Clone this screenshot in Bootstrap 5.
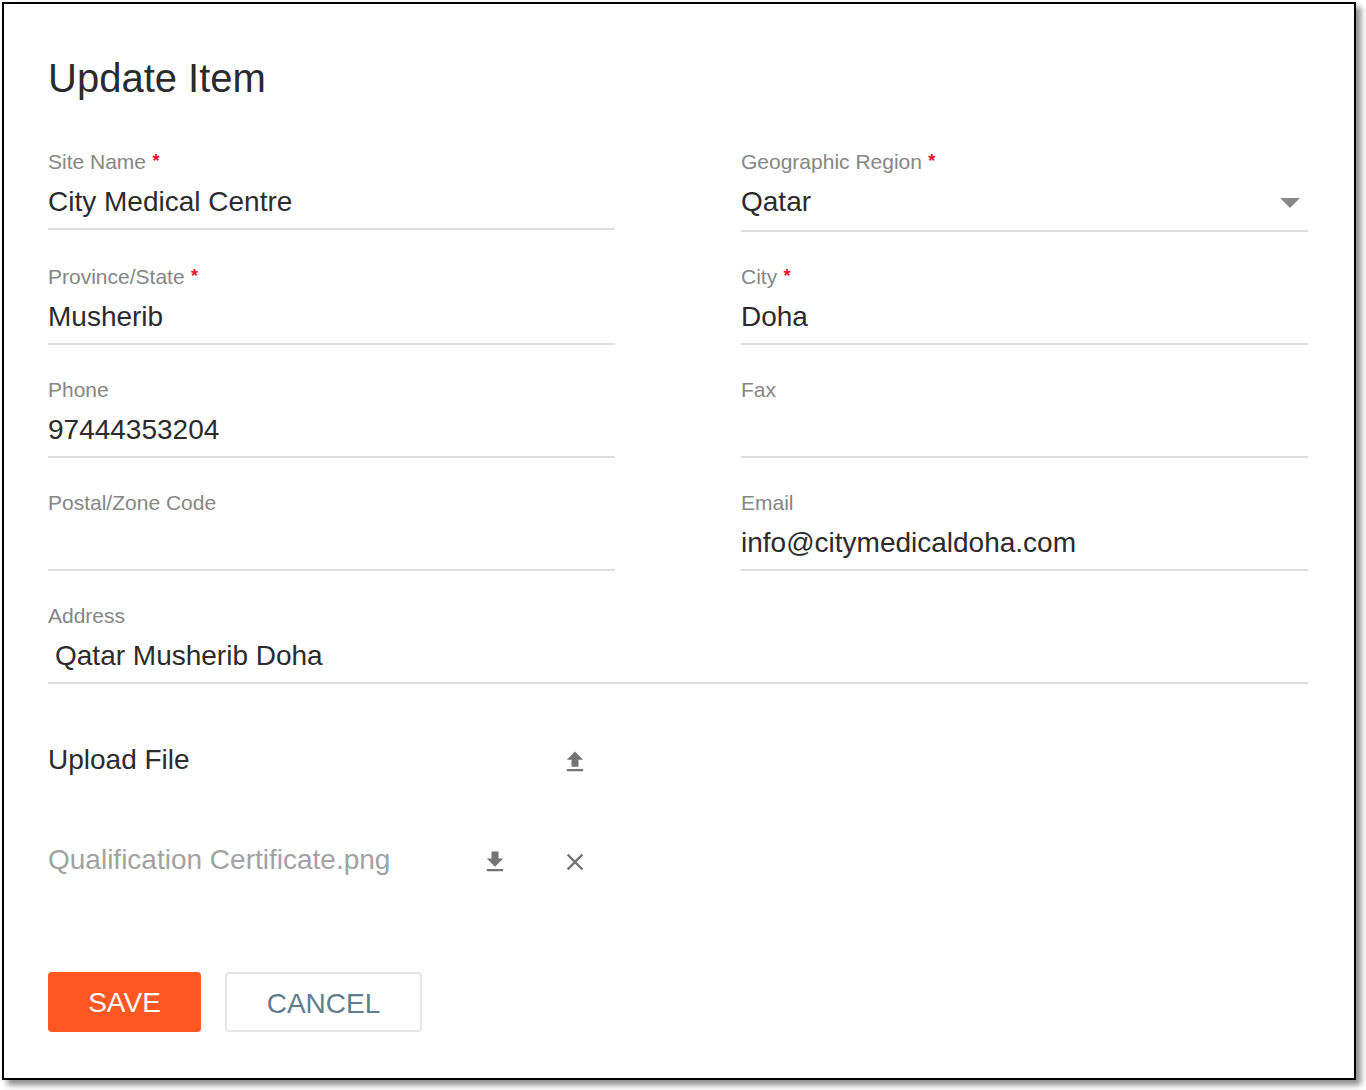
<!DOCTYPE html>
<html lang="en">
<head>
<meta charset="utf-8">
<title>Update Item</title>
<link href="https://cdn.jsdelivr.net/npm/bootstrap@5.3.0/dist/css/bootstrap.min.css" rel="stylesheet">
<style>
html,body{height:1090px;overflow:hidden;background:#fff}
body{font-family:"Liberation Sans",Arial,sans-serif;color:#2b2b2b}
.frame{width:1354px;height:1078px;margin:2px 0 0 2px;border:2px solid #000;background:#fff;box-shadow:5px 5px 6px rgba(0,0,0,.45);padding:0 46px 0 44px}
.ttl{font-size:40px;font-weight:400;line-height:44px;margin:0;padding:52px 0 0 0;height:146px;color:#2b2b2b}
.cols{--bs-gutter-x:126px;--bs-gutter-y:0}
.fld{height:113px;display:block;margin:0}
.fld-first{height:115px}
.fld-last{height:105px}
.lbl{display:block;font-size:21px;line-height:24px;color:#868686;height:24px}
.req{color:#e8112d;font-size:18px;font-weight:700;margin-left:.5px}
.req-star{display:inline-block;transform:translateY(-2px)}
.val{display:block;font-size:28px;line-height:40px;height:54px;padding:8px 0 6px;border:0;width:100%;background:transparent;color:#2b2b2b;font-family:inherit;outline:0}
.line{display:block;height:2px;background:#dedede}
.sel{display:flex;align-items:center;justify-content:space-between;height:56px;padding:8px 0;font-size:28px;line-height:40px}
.caret{width:0;height:0;border-left:10px solid transparent;border-right:10px solid transparent;border-top:10px solid #888;margin-right:8px;margin-top:2px}
.addr{padding-left:7px}
.up-row{height:100px;width:567px;display:flex;align-items:center;font-size:28px;line-height:40px;color:#2b2b2b}
.up-name,.file-name{width:427px;padding-top:2px}
.file-name{color:#a2a2a2}
.ico{width:40px;display:flex;justify-content:center;align-items:center;height:40px;margin-top:6px}
.ico svg{width:28px;height:28px;display:block;fill:#757575}
.act-gap{width:40px}
.btn-save,.btn-cancel{font-size:28px;height:60px;line-height:1;border-radius:4px;padding:0;text-transform:uppercase}
.btn-save{width:153px;background:#ff5722;border:0;color:#fff;padding-top:2px}
.btn-save:hover{background:#ff5722;color:#fff}
.btn-cancel{width:197px;background:#fff;border:2px solid #e6e6e6;color:#607d8b;margin-left:24px;padding-top:4px}
.btn-cancel:hover{background:#fff;color:#607d8b;border-color:#e6e6e6}
.actions{margin-top:63px}
</style>
</head>
<body>
<div class="frame">
  <h1 class="ttl">Update Item</h1>
  <form>
    <div class="row cols">
      <div class="col-6">
        <label class="fld fld-first"><span class="lbl">Site Name <span class="req"><span class="req-star">*</span></span></span><input class="val" value="City Medical Centre"><span class="line"></span></label>
      </div>
      <div class="col-6">
        <div class="fld fld-first"><span class="lbl">Geographic Region <span class="req"><span class="req-star">*</span></span></span><div class="sel"><span>Qatar</span><span class="caret"></span></div><span class="line"></span></div>
      </div>
      <div class="col-6">
        <label class="fld"><span class="lbl">Province/State <span class="req"><span class="req-star">*</span></span></span><input class="val" value="Musherib"><span class="line"></span></label>
      </div>
      <div class="col-6">
        <label class="fld"><span class="lbl">City <span class="req"><span class="req-star">*</span></span></span><input class="val" value="Doha"><span class="line"></span></label>
      </div>
      <div class="col-6">
        <label class="fld"><span class="lbl">Phone</span><input class="val" value="97444353204"><span class="line"></span></label>
      </div>
      <div class="col-6">
        <label class="fld"><span class="lbl">Fax</span><input class="val" value=""><span class="line"></span></label>
      </div>
      <div class="col-6">
        <label class="fld"><span class="lbl">Postal/Zone Code</span><input class="val" value=""><span class="line"></span></label>
      </div>
      <div class="col-6">
        <label class="fld"><span class="lbl">Email</span><input class="val" value="info@citymedicaldoha.com"><span class="line"></span></label>
      </div>
      <div class="col-12">
        <label class="fld fld-last"><span class="lbl">Address</span><input class="val addr" value="Qatar Musherib Doha"><span class="line"></span></label>
      </div>
    </div>
    <div>
      <div class="up-row">
        <span class="up-name">Upload File</span>
        <span class="act-gap"></span>
        <span class="act-gap"></span>
        <span class="ico"><svg viewBox="0 0 24 24"><path d="M9 16h6v-6h4l-7-7-7 7h4zm-4 2h14v2H5z"/></svg></span>
      </div>
      <div class="up-row">
        <span class="file-name">Qualification Certificate.png</span>
        <span class="ico"><svg viewBox="0 0 24 24"><path d="M19 9h-4V3H9v6H5l7 7 7-7zM5 18v2h14v-2H5z"/></svg></span>
        <span class="act-gap"></span>
        <span class="ico"><svg viewBox="0 0 24 24"><path d="M19 6.41 17.59 5 12 10.59 6.41 5 5 6.41 10.59 12 5 17.59 6.41 19 12 13.41 17.59 19 19 17.59 13.41 12z"/></svg></span>
      </div>
    </div>
    <div class="actions d-flex">
      <button type="button" class="btn btn-save">Save</button>
      <button type="button" class="btn btn-cancel">Cancel</button>
    </div>
  </form>
</div>
<script src="https://cdn.jsdelivr.net/npm/bootstrap@5.3.0/dist/js/bootstrap.bundle.min.js"></script>
</body>
</html>
